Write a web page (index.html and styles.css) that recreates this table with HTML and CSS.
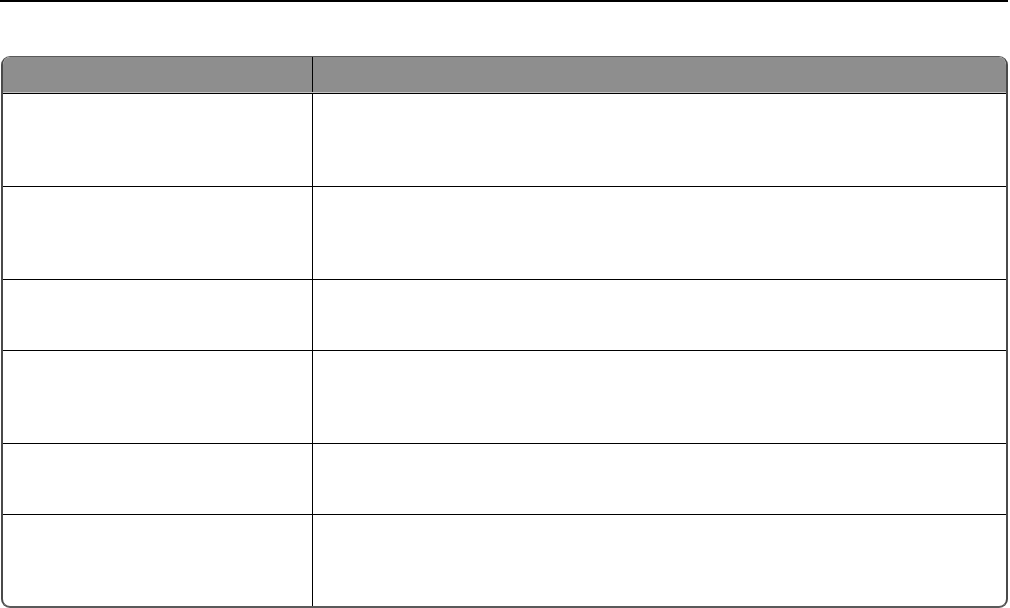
FILE: index.html
```html
<!DOCTYPE html>
<html lang="en">
<head>
<meta charset="utf-8">
<title>Table</title>
<link rel="stylesheet" href="styles.css">
</head>
<body>
<div class="rule"></div>
<div class="table">
  <div class="head">
    <div class="cell first"></div>
    <div class="cell"></div>
  </div>
  <div class="row tall"><div class="cell first"></div><div class="cell"></div></div>
  <div class="row tall"><div class="cell first"></div><div class="cell"></div></div>
  <div class="row short"><div class="cell first"></div><div class="cell"></div></div>
  <div class="row tall"><div class="cell first"></div><div class="cell"></div></div>
  <div class="row short"><div class="cell first"></div><div class="cell"></div></div>
  <div class="row last"><div class="cell first"></div><div class="cell"></div></div>
</div>
</body>
</html>
```

FILE: styles.css
```css
html, body {
  margin: 0;
  padding: 0;
  background: #fff;
  font-family: "Liberation Sans", Arial, sans-serif;
}
.rule {
  width: 1008px;
  height: 2px;
  background: #000;
}
.table {
  box-sizing: border-box;
  margin-top: 54px;
  margin-left: 1px;
  width: 1007px;
  border-top: 1px solid #5a5a5a;
  border-left: 2px solid #4a4a4a;
  border-right: 2px solid #4a4a4a;
  border-bottom: 2px solid #5a5a5a;
  border-radius: 9px;
  overflow: hidden;
}
.head, .row {
  display: grid;
  grid-template-columns: 310px 1fr;
}
.head {
  height: 35px;
  background: #8e8e8e;
  border-bottom: 1px solid #c4c4c4;
}
.row {
  border-top: 1px solid #000;
}
.tall { height: 92px; }
.short { height: 70px; }
.last { height: 91px; }
.cell.first {
  border-right: 1px solid #000;
}
```
